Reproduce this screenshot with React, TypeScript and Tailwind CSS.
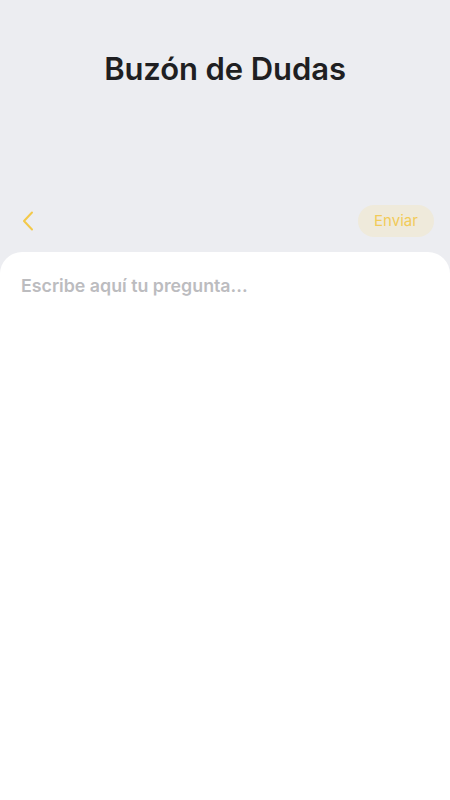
const App = () => {
  return (
    <div className="h-[800px] w-full bg-[#ecedf1] flex flex-col" style={{ fontFamily: "Inter, 'Noto Sans', sans-serif" }}>
      <div className="h-[252px] flex flex-col">
        <h1 className="pt-[46px] text-center text-[31px] font-semibold text-[#1f1f22] tracking-[-0.1px]">Buzón de Dudas</h1>
        <div className="mt-auto mb-[15px] flex items-center justify-between pl-[16px] pr-[16px]">
          <button className="text-[#f3c94a] w-[24px] h-[24px] flex items-center justify-center">
            <svg width="14" height="20" viewBox="0 0 14 20" fill="none" stroke="currentColor" strokeWidth="2" strokeLinecap="round" strokeLinejoin="round">
              <polyline points="11,1.5 3,10 11,18.5" />
            </svg>
          </button>
          <button className="h-[32px] w-[76px] rounded-full bg-[#efeadb] text-[15px] text-[#f2cb58]">Enviar</button>
        </div>
      </div>
      <div className="flex-1 bg-white rounded-t-[22px] px-[21px] pt-[21px]">
        <textarea
          className="w-full h-[200px] resize-none outline-none text-[17.8px] font-semibold text-[#222] placeholder:text-[#bcbcbf]"
          placeholder="Escribe aquí tu pregunta..."
        />
      </div>
    </div>
  );
};

export default App;
